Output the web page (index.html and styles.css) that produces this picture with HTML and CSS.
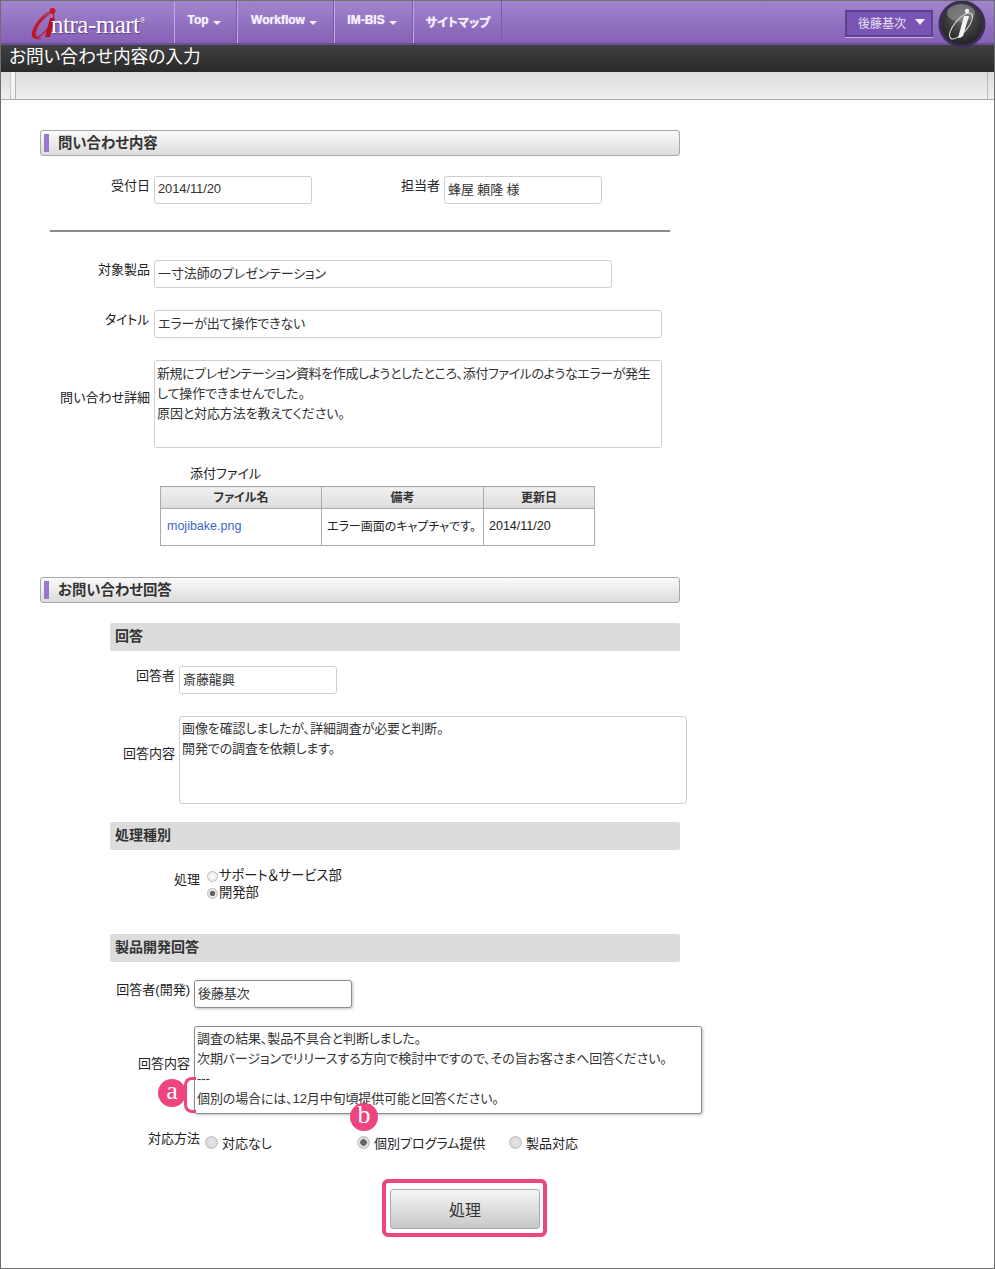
FILE: index.html
```html
<!DOCTYPE html>
<html lang="ja">
<head>
<meta charset="utf-8">
<title>お問い合わせ内容の入力</title>
<link rel="stylesheet" href="styles.css">
</head>
<body>
<div class="frame">
  <header class="nav">
    <div class="logo">
      <svg class="logo-mark" width="34" height="34" viewBox="0 0 34 34">
        <ellipse cx="12" cy="18" rx="6" ry="15.5" transform="rotate(38 12 18)" fill="none" stroke="#c0141f" stroke-width="1.2"/>
        <path d="M22 6C12 7 1 20 2 29C3 33 8 33 12 31C6 32 4 29 5 25C7 17 14 9 22 6z" fill="#c0141f"/>
        <circle cx="21.5" cy="4" r="3" fill="#d0131f"/>
        <path d="M19 11h5l-5 19h-5z" fill="#b5111c"/>
      </svg>
      <span class="logo-text">ntra-mart<sup class="logo-r">®</sup></span>
    </div>
    <a class="nav-item nav-top">Top<i class="caret"></i></a>
    <a class="nav-item nav-wf">Workflow<i class="caret"></i></a>
    <a class="nav-item nav-bis">IM-BIS<i class="caret"></i></a>
    <a class="nav-item nav-map">サイトマップ</a>
    <div class="nav-right">
      <div class="user">後藤基次<i class="user-caret"></i></div>
      <svg class="i-badge" width="48" height="48" viewBox="0 0 48 48">
        <defs>
          <radialGradient id="ib" cx="50%" cy="35%" r="65%">
            <stop offset="0" stop-color="#666"/><stop offset="0.55" stop-color="#3d3d3d"/><stop offset="1" stop-color="#222"/>
          </radialGradient>
        </defs>
        <circle cx="24" cy="24" r="23.5" fill="#3b2c55"/>
        <circle cx="24" cy="24" r="20.5" fill="url(#ib)"/>
        <ellipse cx="23" cy="13" rx="14" ry="9" fill="#8d8d8d" opacity=".65"/>
        <ellipse cx="23" cy="26" rx="6.5" ry="16" transform="rotate(40 23 26)" fill="none" stroke="#ddd" stroke-width="1"/>
        <circle cx="29" cy="11" r="2.2" fill="#f2f2f2"/>
        <path d="M26 16h5l-6 20q-2 2-5 2z" fill="#f2f2f2"/>
      </svg>
    </div>
  </header>
  <h1 class="title">お問い合わせ内容の入力</h1>
  <div class="toolbar"><i class="tb-line"></i><i class="tb-end"></i></div>

  <main class="content">
    <h2 class="section section-first">問い合わせ内容</h2>
    <div class="row row-date">
      <label class="lab lab-a">受付日</label>
      <input class="field w158" value="2014/11/20">
      <label class="lab lab-staff">担当者</label>
      <input class="field w158" value="蜂屋 頼隆 様">
    </div>
    <hr class="rule">
    <div class="row row-product">
      <label class="lab lab-a">対象製品</label>
      <input class="field w458" value="一寸法師のプレゼンテーション">
    </div>
    <div class="row row-gap22">
      <label class="lab lab-a lab-up">タイトル</label>
      <input class="field w508" value="エラーが出て操作できない">
    </div>
    <div class="row row-gap22">
      <label class="lab lab-a lab-mid">問い合わせ詳細</label>
      <div class="field area area-static w508"><span class="tight">新規にプレゼンテーション資料を作成しようとしたところ、添付ファイルのようなエラーが発生</span><br>して操作できませんでした。<br>原因と対応方法を教えてください。</div>
    </div>
    <div class="attach-title">添付ファイル</div>
    <table class="files">
      <thead><tr><th class="c1">ファイル名</th><th class="c2">備考</th><th class="c3">更新日</th></tr></thead>
      <tbody><tr><td><a class="link">mojibake.png</a></td><td>エラー画面のキャプチャです。</td><td>2014/11/20</td></tr></tbody>
    </table>

    <h2 class="section section-second">お問い合わせ回答</h2>
    <div class="sub sub-1">回答</div>
    <div class="row row-gap15">
      <label class="lab lab-b">回答者</label>
      <input class="field w158" value="斎藤龍興">
    </div>
    <div class="row row-gap22">
      <label class="lab lab-b lab-mid">回答内容</label>
      <textarea class="field area w508">画像を確認しましたが、詳細調査が必要と判断。
開発での調査を依頼します。</textarea>
    </div>
    <div class="sub sub-2">処理種別</div>
    <div class="row row-proc">
      <label class="lab lab-c lab-proc">処理</label>
      <div class="radios">
        <label class="radio-line"><input class="radio" type="radio" name="dept">サポート＆サービス部</label>
        <label class="radio-line"><input class="radio" type="radio" name="dept" checked>開発部</label>
      </div>
    </div>
    <div class="sub sub-3">製品開発回答</div>
    <div class="row row-dev">
      <label class="lab lab-c">回答者(開発)</label>
      <input class="field w158 strong" value="後藤基次">
    </div>
    <div class="row row-gap18 row-rel">
      <label class="lab lab-c lab-mid">回答内容</label>
      <textarea class="field area w508 strong">調査の結果、製品不具合と判断しました。
次期バージョンでリリースする方向で検討中ですので、その旨お客さまへ回答ください。
---
個別の場合には、12月中旬頃提供可能と回答ください。</textarea>
      <i class="bracket"></i>
      <span class="pin pin-a">a</span>
      <span class="pin pin-b">b</span>
    </div>
    <div class="row row-method">
      <label class="lab lab-c lab-method">対応方法</label>
      <label class="opt opt-1"><input class="radio big" type="radio" name="m">対応なし</label>
      <label class="opt opt-2"><input class="radio big" type="radio" name="m" checked>個別プログラム提供</label>
      <label class="opt"><input class="radio big" type="radio" name="m">製品対応</label>
    </div>
    <div class="actions">
      <div class="highlight"><button class="btn" type="button">処理</button></div>
    </div>
  </main>
</div>
</body>
</html>
```

FILE: styles.css
```css
* { box-sizing: border-box; }
html, body { margin: 0; padding: 0; }
body {
  font-family: "Liberation Sans", "Noto Sans CJK JP", sans-serif;
  font-size: 13px;
  color: #222;
  background: #fff;
  font-feature-settings: "palt";
}
.frame {
  width: 995px;
  height: 1269px;
  border: 1px solid #6e6e6e;
  overflow: hidden;
}

/* top bar */
.nav {
  display: flex;
  height: 44px;
  background: linear-gradient(#a184cd, #8561b6);
  border-bottom: 2px solid #6d4e99;
  color: #fff;
}
.logo {
  width: 173px;
  display: flex;
  align-items: center;
  padding: 2px 0 0 30px;
}
.logo-mark { flex: none; margin-right: -14px; margin-top: 1px; }
.logo-text {
  font-family: "Liberation Serif", serif;
  font-size: 26px;
  letter-spacing: -.5px;
  transform: scaleX(.96);
  transform-origin: left;
  white-space: nowrap;
  margin-top: 3px;
  text-shadow: 1px 1px 1px #5c3f85;
}
.logo-r { font-size: 9px; vertical-align: 10px; line-height: 0; }
.nav-item {
  display: flex;
  align-items: flex-start;
  justify-content: center;
  padding: 12px 3px 0 0;
  font-size: 12px;
  font-weight: bold;
  border-left: 1px solid #c0abdd;
  border-right: 1px solid #7a58aa;
  text-shadow: 0 0 1px #e8defa;
  color: #f6f1ff;
}
.nav-top { width: 63px; }
.nav-wf { width: 97px; }
.nav-bis { width: 79px; }
.nav-map { width: 89px; padding-right: 0; padding-left: 1px; }
.caret {
  width: 0;
  height: 0;
  margin: 8px 0 0 4px;
  border-left: 4px solid transparent;
  border-right: 4px solid transparent;
  border-top: 4px solid #f4f0fb;
}
.nav-right {
  margin-left: auto;
  display: flex;
  align-items: flex-start;
  gap: 5px;
  padding: 0 8px 0 0;
}
.user {
  width: 88px;
  height: 27px;
  margin-top: 9px;
  padding: 0 0 3px 11px;
  display: flex;
  align-items: center;
  font-size: 12px;
  color: #e9e0f7;
  background: #7a54b3;
  border: 2px solid #5e3f94;
  box-shadow: 0 1px 0 #c9b6e6;
}
.user-caret {
  width: 0;
  height: 0;
  margin-left: 9px;
  border-left: 5px solid transparent;
  border-right: 5px solid transparent;
  border-top: 6px solid #f2edfa;
}
.i-badge { flex: none; margin-top: -1px; position: relative; z-index: 2; }

.title {
  margin: 0;
  height: 27px;
  padding-left: 8px;
  font-size: 17.7px;
  line-height: 25px;
  font-weight: normal;
  color: #fff;
  background: linear-gradient(#414141, #292929);
}
.toolbar {
  display: flex;
  justify-content: space-between;
  height: 28px;
  padding: 0 6px 0 9px;
  background: linear-gradient(#dcdcdc, #f0f0f0);
  border-bottom: 1px solid #a8a8a8;
}
.tb-line {
  width: 6px;
  border-left: 1px solid #c8c8c8;
  border-right: 1px solid #b4b4b4;
  background: #f3f3f3;
}
.tb-end { width: 1px; background: #b8b8b8; }

/* form */
.content { padding-left: 39px; }
.section {
  width: 640px;
  height: 26px;
  margin: 0;
  padding-left: 17px;
  border: 1px solid #a9a9a9;
  border-radius: 3px;
  background: linear-gradient(#fafafa, #dcdcdc);
  font-size: 14.4px;
  line-height: 24px;
  font-weight: bold;
  color: #333;
  position: relative;
}
.section::before {
  content: "";
  position: absolute;
  left: 3px;
  top: 3px;
  width: 5px;
  height: 18px;
  background: #9b77cf;
}
.section-first { margin-top: 30px; }
.section-second { margin-top: 31px; }

.row { display: flex; align-items: flex-start; }
.row-date { margin-top: 20px; }
.row-product { margin-top: 28px; }
.row-gap22 { margin-top: 22px; }
.row-gap15 { margin-top: 15px; }
.row-gap18 { margin-top: 18px; }
.row-proc { margin-top: 16px; }
.row-dev { margin-top: 18px; }
.row-rel { position: relative; }
.row-method { margin-top: 14px; }

.lab {
  flex: none;
  text-align: right;
  line-height: 18px;
  padding: 1px 4px 0 0;
  color: #222;
  white-space: nowrap;
}
.lab-a { width: 114px; }
.lab-b { width: 139px; }
.lab-c { width: 154px; }
.lab-staff { width: 132px; }
.lab-up { padding-right: 5px; letter-spacing: -.2px; }
.lab-mid { align-self: center; padding-bottom: 14px; }
.lab-proc { width: 165px; padding-top: 1px; margin-top: 4px; padding-right: 5px; }
.lab-method { padding-top: 0; margin-top: 2px; width: 164px; padding-right: 4px; }

.field {
  display: block;
  flex: none;
  height: 28px;
  padding: 0 3px 4px;
  border: 1px solid #cfcfcf;
  border-radius: 3px;
  background: #fff;
  font: inherit;
  font-feature-settings: "palt";
  letter-spacing: -.12px;
  color: #333;
  outline: none;
}
.w158 { width: 158px; }
.w458 { width: 458px; }
.w508 { width: 508px; }
.area {
  height: 88px;
  padding: 2px;
  line-height: 20px;
  resize: none;
  overflow: hidden;
}
.area-static { padding-top: 3px; }
.tight { letter-spacing: -.39px; white-space: nowrap; }
.strong {
  border-color: #8c8c8c;
  box-shadow: 1px 1px 3px rgba(0, 0, 0, .25);
}
.rule {
  width: 620px;
  height: 2px;
  margin: 26px 0 0 10px;
  border: 0;
  background: #8a8a8a;
}
.attach-title {
  margin: 17px 0 0 150px;
  line-height: 18px;
}
.files {
  margin: 3px 0 0 120px;
  width: 435px;
  table-layout: fixed;
  border-collapse: collapse;
}
.files th, .files td {
  border: 1px solid #ababab;
  padding: 0 5px 3px;
  font-size: 12px;
  white-space: nowrap;
}
.files th {
  height: 22px;
  text-align: center;
  color: #333;
  background: linear-gradient(#f0f0f0, #dcdcdc);
}
.files td { height: 37px; }
.c1 { width: 161px; }
.c2 { width: 162px; }
.link { color: #3a66c8; padding-left: 1px; }
.files td:first-child, .files td:last-child { font-size: 12.5px; }

.sub {
  width: 570px;
  height: 28px;
  margin-left: 70px;
  padding-left: 5px;
  line-height: 27px;
  font-size: 14px;
  font-weight: bold;
  color: #333;
  background: #dcdcdc;
  border-radius: 2px;
}
.sub-1 { margin-top: 20px; }
.sub-2 { margin-top: 18px; }
.sub-3 { margin-top: 34px; }

.radios { display: flex; flex-direction: column; font-size: 13.3px; }
.radio-line { display: flex; align-items: center; height: 17px; }
.radio {
  appearance: none;
  flex: none;
  width: 11px;
  height: 11px;
  margin: 3px 1px 0 2px;
  border: 1px solid #bdbdbd;
  border-radius: 50%;
  background: radial-gradient(#fff, #e2e2e2);
}
.radio:checked { background: radial-gradient(#666 0 2.5px, #e6e6e6 3px); }
.big { width: 13px; height: 13px; margin: 0 4px 0 1px; background: radial-gradient(#e8e8e8, #cfcfcf); }
.big:checked { background: radial-gradient(#666 0 3px, #dcdcdc 3.5px); }
.opt { display: flex; align-items: center; height: 20px; margin-top: 4px; }
.opt-1 { width: 152px; }
.opt-2 { width: 152px; }

.bracket {
  position: absolute;
  left: 144px;
  top: 51px;
  width: 12px;
  height: 36px;
  border: 3px solid #ec4580;
  border-right: 0;
  border-radius: 8px 0 0 8px;
}
.pin {
  position: absolute;
  width: 28px;
  height: 28px;
  border-radius: 50%;
  background: #ee4480;
  color: #fff;
  font-family: "Liberation Serif", serif;
  font-size: 26px;
  line-height: 23px;
  text-align: center;
}
.pin-a { left: 118px; top: 53px; }
.pin-b { left: 310px; top: 77px; }

.actions { margin-top: 27px; padding-left: 342px; }
.highlight {
  width: 165px;
  height: 58px;
  padding: 6px 3px 4px 4px;
  border: 4px solid #ee4480;
  border-radius: 6px;
  background: #fff;
}
.btn {
  display: block;
  width: 150px;
  height: 40px;
  border: 1px solid #a9a9a9;
  border-radius: 3px;
  background: linear-gradient(#f5f5f5, #c8c8c8);
  font: inherit;
  font-size: 16px;
  color: #333;
}
```
